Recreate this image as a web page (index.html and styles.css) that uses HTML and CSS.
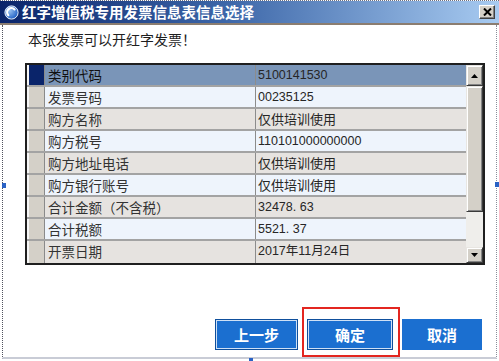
FILE: index.html
```html
<!DOCTYPE html>
<html lang="zh-CN">
<head>
<meta charset="utf-8">
<title>红字增值税专用发票信息表信息选择</title>
<link rel="stylesheet" href="styles.css">
</head>
<body>
<div class="window">
  <div class="titlebar">
    <svg class="app-icon" width="15" height="15" viewBox="0 0 15 15">
      <defs>
        <radialGradient id="g" cx="35%" cy="35%" r="70%">
          <stop offset="0" stop-color="#9cc4f2"/>
          <stop offset="1" stop-color="#1f5fc4"/>
        </radialGradient>
      </defs>
      <circle cx="7.5" cy="7.5" r="6.6" fill="url(#g)" stroke="#e8f0fb" stroke-width="1"/>
      <path d="M4.3 10.2 A4.2 4.2 0 0 1 10.6 4.4" fill="none" stroke="#fff" stroke-width="2.2" stroke-linecap="round"/>
    </svg>
    <span class="title">红字增值税专用发票信息表信息选择</span>
    <div class="close">
      <svg width="9" height="8" viewBox="0 0 9 8"><path d="M1 0.5 L8 7.5 M8 0.5 L1 7.5" stroke="#000" stroke-width="2"/></svg>
    </div>
  </div>
  <div class="client">
    <p class="message">本张发票可以开红字发票！</p>
    <div class="grid">
      <div class="rows">
        <div class="row selected"><span class="rh"></span><span class="label">类别代码</span><span class="value">5100141530</span></div>
        <div class="row even"><span class="rh"></span><span class="label">发票号码</span><span class="value">00235125</span></div>
        <div class="row odd"><span class="rh"></span><span class="label">购方名称</span><span class="value cjk">仅供培训使用</span></div>
        <div class="row even"><span class="rh"></span><span class="label">购方税号</span><span class="value">110101000000000</span></div>
        <div class="row odd"><span class="rh"></span><span class="label">购方地址电话</span><span class="value cjk">仅供培训使用</span></div>
        <div class="row even"><span class="rh"></span><span class="label">购方银行账号</span><span class="value cjk">仅供培训使用</span></div>
        <div class="row odd"><span class="rh"></span><span class="label">合计金额（不含税）</span><span class="value">32478. 63</span></div>
        <div class="row even"><span class="rh"></span><span class="label">合计税额</span><span class="value">5521. 37</span></div>
        <div class="row odd last"><span class="rh"></span><span class="label">开票日期</span><span class="value">2017年11月24日</span></div>
      </div>
      <div class="scrollbar">
        <div class="sb-btn up"><svg width="7" height="4" viewBox="0 0 7 4"><path d="M0 4 L3.5 0 L7 4 Z" fill="#000"/></svg></div>
        <div class="thumb"></div>
        <div class="track"></div>
        <div class="sb-btn down"><svg width="7" height="4" viewBox="0 0 7 4"><path d="M0 0 L3.5 4 L7 0 Z" fill="#000"/></svg></div>
      </div>
    </div>
    <div class="actions">
      <button class="btn prev">上一步</button>
      <div class="highlight"><button class="btn ok">确定</button></div>
      <button class="btn cancel">取消</button>
    </div>
  </div>
  <span class="handle h-left"></span>
  <span class="handle h-right"></span>
  <span class="handle h-bottom"></span>
</div>
</body>
</html>
```

FILE: styles.css
```css
html, body {
  margin: 0;
  padding: 0;
}

body {
  width: 499px;
  height: 361px;
  overflow: hidden;
  background: #ffffff;
  font-family: "Noto Sans CJK SC", "Liberation Sans", sans-serif;
}

.window {
  position: relative;
  width: 499px;
  height: 361px;
  box-sizing: border-box;
  border-top: 1px dotted #6d7080;
  display: flex;
  flex-direction: column;
}

.titlebar {
  height: 22px;
  flex: none;
  display: flex;
  align-items: center;
  padding-left: 4px;
  background: linear-gradient(90deg, #0a246a 0%, #3c66a8 45%, #a8cbf1 100%);
  border-bottom: 2px solid #8b7d70;
}

.app-icon {
  flex: none;
  margin-right: 3px;
}

.title {
  color: #ffffff;
  font-weight: bold;
  font-size: 14.5px;
  line-height: 22px;
  white-space: nowrap;
}

.close {
  margin-left: auto;
  margin-right: 4px;
  width: 16px;
  height: 14px;
  box-sizing: border-box;
  background: #d4d0c8;
  border: 1px solid;
  border-color: #ffffff #404040 #404040 #ffffff;
  box-shadow: inset -1px -1px #808080;
  display: flex;
  align-items: center;
  justify-content: center;
}

.client {
  flex: 1;
  display: flex;
  flex-direction: column;
  margin: 0 2px 2px 2px;
  border-left: 1px dotted #50535f;
  border-right: 1px dotted #8a8d9a;
  border-bottom: 2px solid #c9ccd6;
}

.message {
  margin: 4px 0 0 25px;
  font-size: 14px;
  line-height: 20px;
  color: #1e1e1e;
}

.grid {
  margin: 14px 0 0 22px;
  width: 460px;
  height: 202px;
  box-sizing: border-box;
  border: 2px solid #1f1f1f;
  display: flex;
}

.rows {
  flex: 1;
  display: flex;
  flex-direction: column;
}

.row {
  height: 22px;
  box-sizing: border-box;
  display: flex;
  border-bottom: 2px solid #a3a3a3;
}

.row.last {
  border-bottom: none;
}

.row.selected { background: #7a95b8; }
.row.even { background: #eef4fc; }
.row.odd { background: #e6e3e0; }

.rh {
  width: 18px;
  flex: none;
  box-sizing: border-box;
  background: #d4d0c8;
  border-left: 2px solid #f6f6f6;
  border-right: 1px solid #8a8a8a;
}

.row.selected .rh {
  background: #0a246a;
}

.label {
  width: 211px;
  flex: none;
  box-sizing: border-box;
  padding-left: 3px;
  border-right: 1px solid #8c8c8c;
  font-size: 13.5px;
  line-height: 20px;
  color: #333333;
  white-space: nowrap;
}

.row.selected .label {
  color: #111111;
}

.value {
  flex: 1;
  padding-left: 2px;
  font-family: "Liberation Sans", "Noto Sans CJK SC", sans-serif;
  font-size: 12.5px;
  line-height: 20px;
  color: #262626;
  white-space: nowrap;
}

.value.cjk {
  font-family: "Noto Sans CJK SC", sans-serif;
  font-size: 13px;
}

.scrollbar {
  width: 17px;
  flex: none;
  display: flex;
  flex-direction: column;
  background: #efedea;
}

.sb-btn,
.thumb {
  box-sizing: border-box;
  background: #d4d0c8;
  border: 1px solid;
  border-color: #e8e6e2 #3a3a3a #3a3a3a #e8e6e2;
  box-shadow: inset 1px 1px #ffffff, inset -1px -1px #848484;
}

.sb-btn {
  display: flex;
  align-items: center;
  justify-content: center;
}

.sb-btn.up { height: 21px; flex: none; }
.sb-btn.down { height: 16px; flex: none; }

.thumb {
  height: 126px;
  flex: none;
}

.track {
  flex: 1;
  background: #efeeeb;
}

.actions {
  margin-top: auto;
  display: flex;
  justify-content: flex-end;
  align-items: flex-end;
  padding-right: 14px;
}

.btn {
  height: 31px;
  box-sizing: border-box;
  margin: 0;
  padding: 0;
  background: #1b6fd0;
  color: #ffffff;
  font-family: "Noto Sans CJK SC", sans-serif;
  font-weight: bold;
  font-size: 15px;
  line-height: 27px;
  border: 1px solid #0f4f9c;
  box-shadow: inset 0 0 0 1px #cfe1f6;
  cursor: pointer;
}

.btn.prev {
  width: 83px;
  margin: 0 4px 7px 0;
}

.btn.ok {
  width: 86px;
  display: block;
}

.btn.cancel {
  width: 80px;
  margin: 0 0 7px 2px;
  box-shadow: none;
  border-color: #1b6fd0;
}

.highlight {
  border: 2px solid #e32620;
  padding: 10px 5px 5px 3px;
}

.handle {
  position: absolute;
  width: 4px;
  height: 5px;
  background: #2a62c4;
}

.h-left { left: 2px; top: 182px; }
.h-right { left: 495px; top: 181px; }
.h-bottom { left: 249px; top: 357px; height: 4px; }
```
